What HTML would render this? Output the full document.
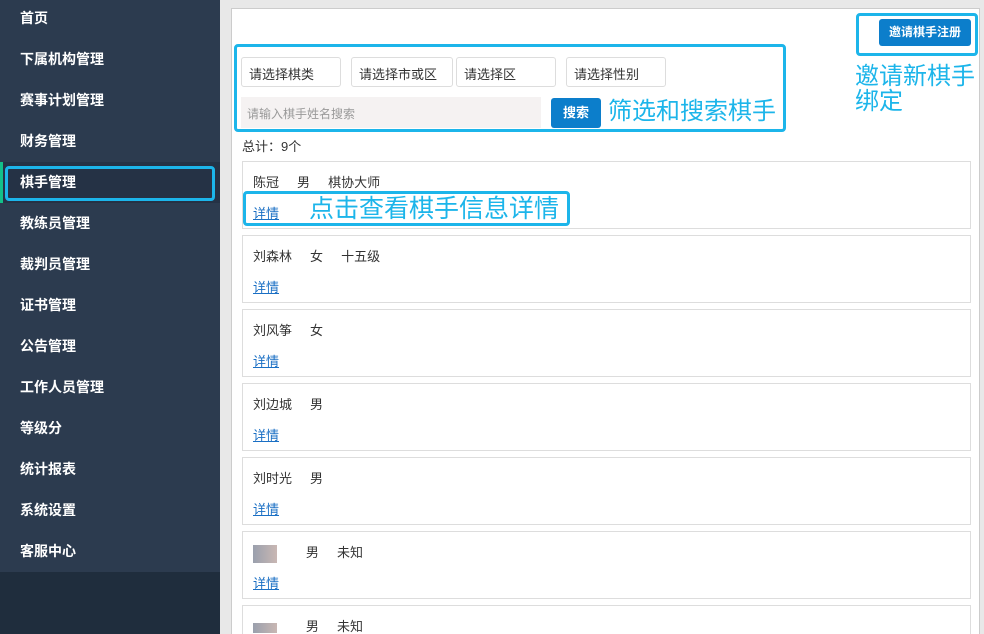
<!DOCTYPE html>
<html style="overflow:hidden"><head><meta charset="utf-8"><style>
*{box-sizing:border-box;margin:0;padding:0}
html,body{width:984px;height:634px;overflow:hidden}
body{background:#e8e8e8;font-family:"Liberation Sans","Noto Sans CJK SC",sans-serif;position:relative}
.side{position:absolute;left:0;top:0;width:220px;height:634px;background:#1f2d3d}
.sidetop{position:absolute;left:0;top:0;width:220px;height:572px;background:#2c3b4f}
.item{position:absolute;left:20px;color:#fff;font-size:14px;font-weight:bold;line-height:18px}
.act{position:absolute;left:0;top:162px;width:220px;height:41px;background:#253245}
.actbar{position:absolute;left:0;top:162px;width:3px;height:41px;background:#13c08a}
.hl{position:absolute;border:3px solid #1cb5ea;border-radius:4px}
.panel{position:absolute;left:231px;top:8px;width:749px;height:626px;background:#fff;border:1px solid #ccc;border-bottom:none}
.sel{position:absolute;top:57px;height:30px;border:1px solid #ddd;border-radius:3px;font-size:13px;color:#333;padding:6px 0 0 7px}
.search{position:absolute;left:241px;top:97px;width:300px;height:31px;background:#f5f2f2;font-size:12px;color:#999;padding:8px 0 0 6px}
.btn{position:absolute;background:#0c7ecb;color:#fff;font-weight:bold;font-size:12px;border-radius:3px;text-align:center}
.note{position:absolute;color:#1cb5ea;font-size:24px;line-height:25px}
.card{position:absolute;left:242px;width:729px;height:68px;border:1px solid #ddd;background:#fff}
.card .t{position:absolute;left:10px;top:10px;font-size:13px;color:#333;white-space:pre}
.card a{position:absolute;left:10px;top:41px;font-size:13px;color:#1a6fc4;text-decoration:underline}
.blur{display:inline-block;width:24px;height:18px;background:linear-gradient(90deg,#9aa0ad,#c9b7b3);vertical-align:middle}
</style></head><body>
<div class="side"><div class="sidetop"></div>
<div class="act"></div><div class="actbar"></div>
<div class="item" style="top:9px">首页</div>
<div class="item" style="top:50px">下属机构管理</div>
<div class="item" style="top:91px">赛事计划管理</div>
<div class="item" style="top:132px">财务管理</div>
<div class="item" style="top:173px">棋手管理</div>
<div class="item" style="top:214px">教练员管理</div>
<div class="item" style="top:255px">裁判员管理</div>
<div class="item" style="top:296px">证书管理</div>
<div class="item" style="top:337px">公告管理</div>
<div class="item" style="top:378px">工作人员管理</div>
<div class="item" style="top:419px">等级分</div>
<div class="item" style="top:460px">统计报表</div>
<div class="item" style="top:501px">系统设置</div>
<div class="item" style="top:542px">客服中心</div>
<div class="hl" style="left:5px;top:166px;width:210px;height:35px"></div>
</div>
<div class="panel"></div>
<div class="btn" style="left:879px;top:19px;width:92px;height:27px;line-height:27px">邀请棋手注册</div>
<div class="hl" style="left:856px;top:13px;width:122px;height:43px"></div>
<div class="note" style="left:855px;top:64px">邀请新棋手<br>绑定</div>
<div class="sel" style="left:241px;width:100px">请选择棋类</div>
<div class="sel" style="left:351px;width:102px">请选择市或区</div>
<div class="sel" style="left:456px;width:100px">请选择区</div>
<div class="sel" style="left:566px;width:100px">请选择性别</div>
<div class="search">请输入棋手姓名搜索</div>
<div class="btn" style="left:551px;top:98px;width:50px;height:30px;line-height:30px;font-size:13px">搜索</div>
<div class="note" style="left:608px;top:99px">筛选和搜索棋手</div>
<div class="hl" style="left:234px;top:44px;width:552px;height:88px"></div>
<div style="position:absolute;left:242px;top:136px;font-size:13px;color:#333">总计：9个</div>

<div class="card" style="top:161px"><div class="t">陈冠     男     棋协大师</div><a>详情</a></div>
<div class="hl" style="left:243px;top:191px;width:327px;height:35px"></div>
<div class="note" style="left:309px;top:197px;font-size:25px">点击查看棋手信息详情</div>
<div class="card" style="top:235px"><div class="t">刘森林     女     十五级</div><a>详情</a></div>
<div class="card" style="top:309px"><div class="t">刘风筝     女</div><a>详情</a></div>
<div class="card" style="top:383px"><div class="t">刘边城     男</div><a>详情</a></div>
<div class="card" style="top:457px"><div class="t">刘时光     男</div><a>详情</a></div>
<div class="card" style="top:531px"><div class="t"><span class="blur"></span>        男     未知</div><a>详情</a></div>
<div class="card" style="top:605px;height:29px;border-bottom:none;overflow:hidden"><div class="t"><span class="blur" style="height:10px"></span>        男     未知</div></div>
</body></html>
